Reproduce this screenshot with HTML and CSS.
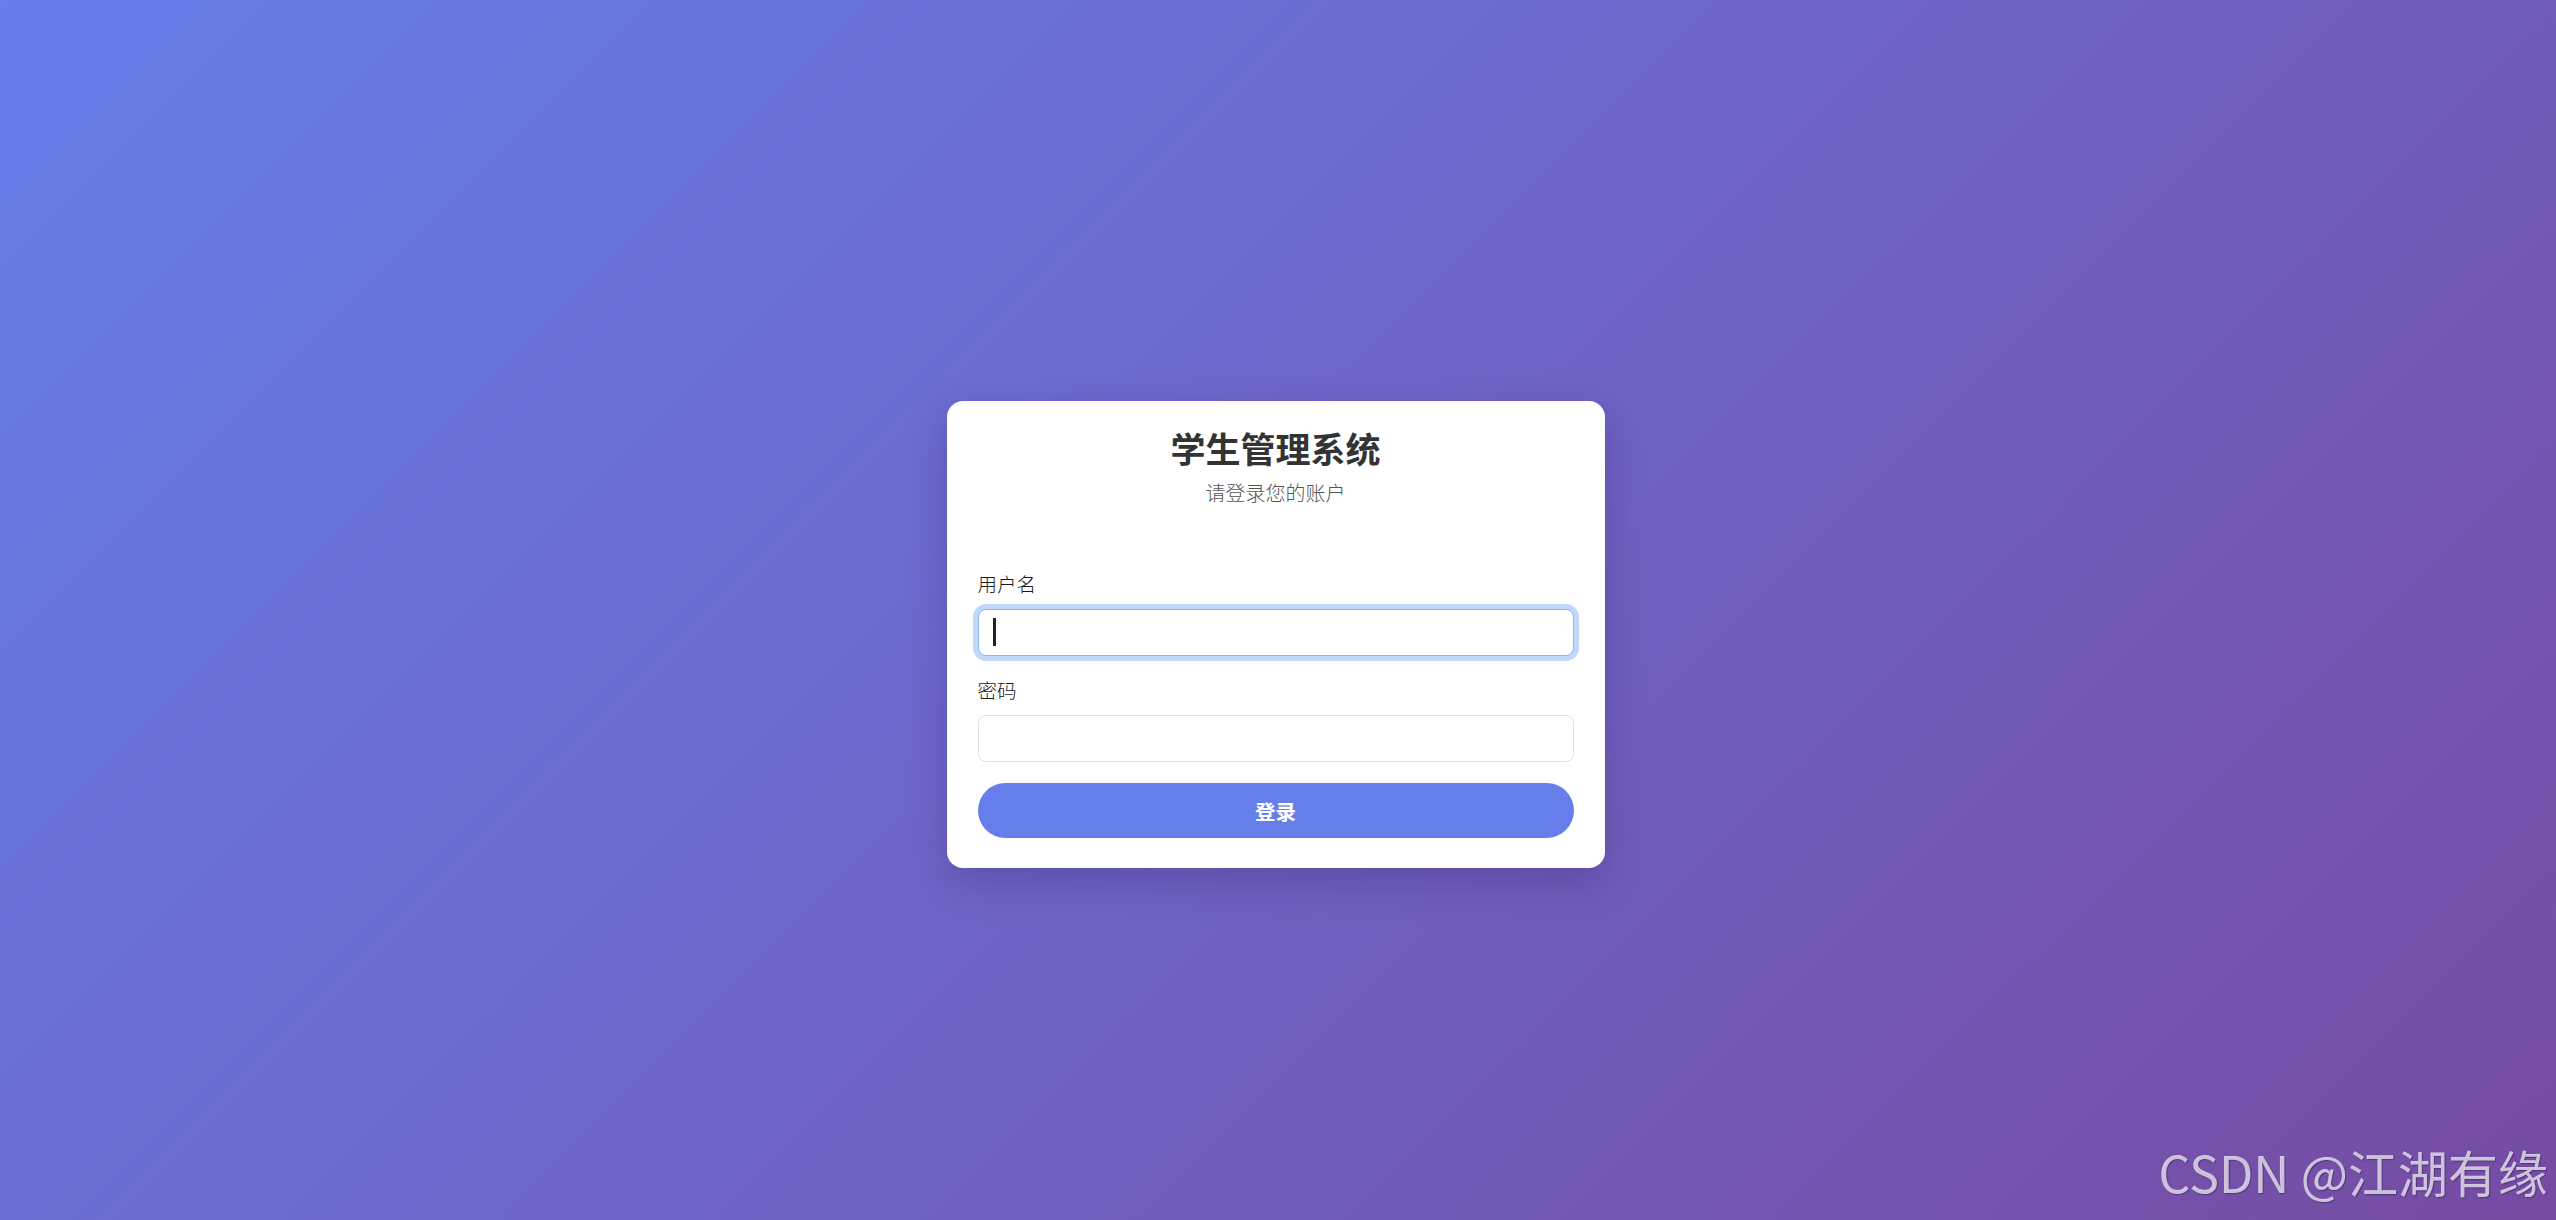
FILE: index.html
```html
<!DOCTYPE html>
<html lang="zh-CN">
<head>
<meta charset="utf-8">
<title>学生管理系统</title>
<link rel="stylesheet" href="styles.css">
</head>
<body>
<div class="login-card">
  <div class="login-header">
    <h1 class="title">学生管理系统</h1>
    <p class="subtitle">请登录您的账户</p>
  </div>
  <form class="login-form">
    <div class="form-group">
      <label class="form-label" for="username">用户名</label>
      <div class="input-wrap">
        <input class="form-input is-focus" id="username" type="text">
        <span class="caret"></span>
      </div>
    </div>
    <div class="form-group">
      <label class="form-label" for="password">密码</label>
      <div class="input-wrap">
        <input class="form-input" id="password" type="password">
      </div>
    </div>
    <button class="login-btn" type="button">登录</button>
  </form>
</div>
<div class="watermark">CSDN @江湖有缘</div>
</body>
</html>
```
FILE: styles.css
```css
* {
  box-sizing: border-box;
}
html, body {
  margin: 0;
  padding: 0;
}
body {
  min-height: 100vh;
  background: linear-gradient(135deg, #667eea 0%, #764ba2 100%);
  display: flex;
  align-items: center;
  justify-content: center;
  padding-top: 49px;
  padding-right: 5px;
  font-family: "Noto Sans CJK SC", "Noto Sans", sans-serif;
  overflow: hidden;
}
.login-card {
  width: 658px;
  background: #ffffff;
  border-radius: 16px;
  padding: 25px 31px 30px;
  box-shadow: 0 14px 38px rgba(40, 20, 90, 0.25);
}
.login-header {
  text-align: center;
  margin-bottom: 67px;
}
.title {
  margin: 0;
  font-size: 35px;
  line-height: 43px;
  font-weight: 700;
  color: #333333;
}
.subtitle {
  margin: 12px 0 0;
  font-size: 20px;
  line-height: 24px;
  font-weight: 300;
  color: #555555;
}
.login-form {
  display: flex;
  flex-direction: column;
}
.form-group {
  display: flex;
  flex-direction: column;
  gap: 13px;
  margin-bottom: 22px;
}
.form-group + .form-group {
  margin-bottom: 21px;
}
.form-label {
  font-size: 19.5px;
  line-height: 24px;
  font-weight: 300;
  color: #1a1a1a;
}
.input-wrap {
  position: relative;
}
.form-input {
  display: block;
  width: 100%;
  height: 47px;
  padding: 0 16px;
  border: 1px solid #e2e2e6;
  border-radius: 8px;
  font-size: 20px;
  font-family: inherit;
  background: #ffffff;
  outline: none;
}
.form-input.is-focus {
  border-color: #8ab4f8;
  box-shadow: 0 0 0 5px rgba(66, 133, 244, 0.32);
}
.caret {
  position: absolute;
  left: 15px;
  top: 9px;
  width: 3px;
  height: 28px;
  background: #222222;
}
.login-btn {
  display: block;
  width: 100%;
  height: 55px;
  border: none;
  border-radius: 28px;
  background: #667eea;
  color: #ffffff;
  font-family: inherit;
  font-size: 20.5px;
  font-weight: 700;
  cursor: pointer;
}
.watermark {
  position: absolute;
  right: 8px;
  bottom: 24px;
  font-family: "Noto Sans CJK SC", sans-serif;
  font-size: 50px;
  line-height: 1;
  color: rgba(255, 255, 255, 0.7);
  text-shadow: 1px 1px 1px rgba(40, 20, 80, 0.45);
  white-space: nowrap;
}
```
